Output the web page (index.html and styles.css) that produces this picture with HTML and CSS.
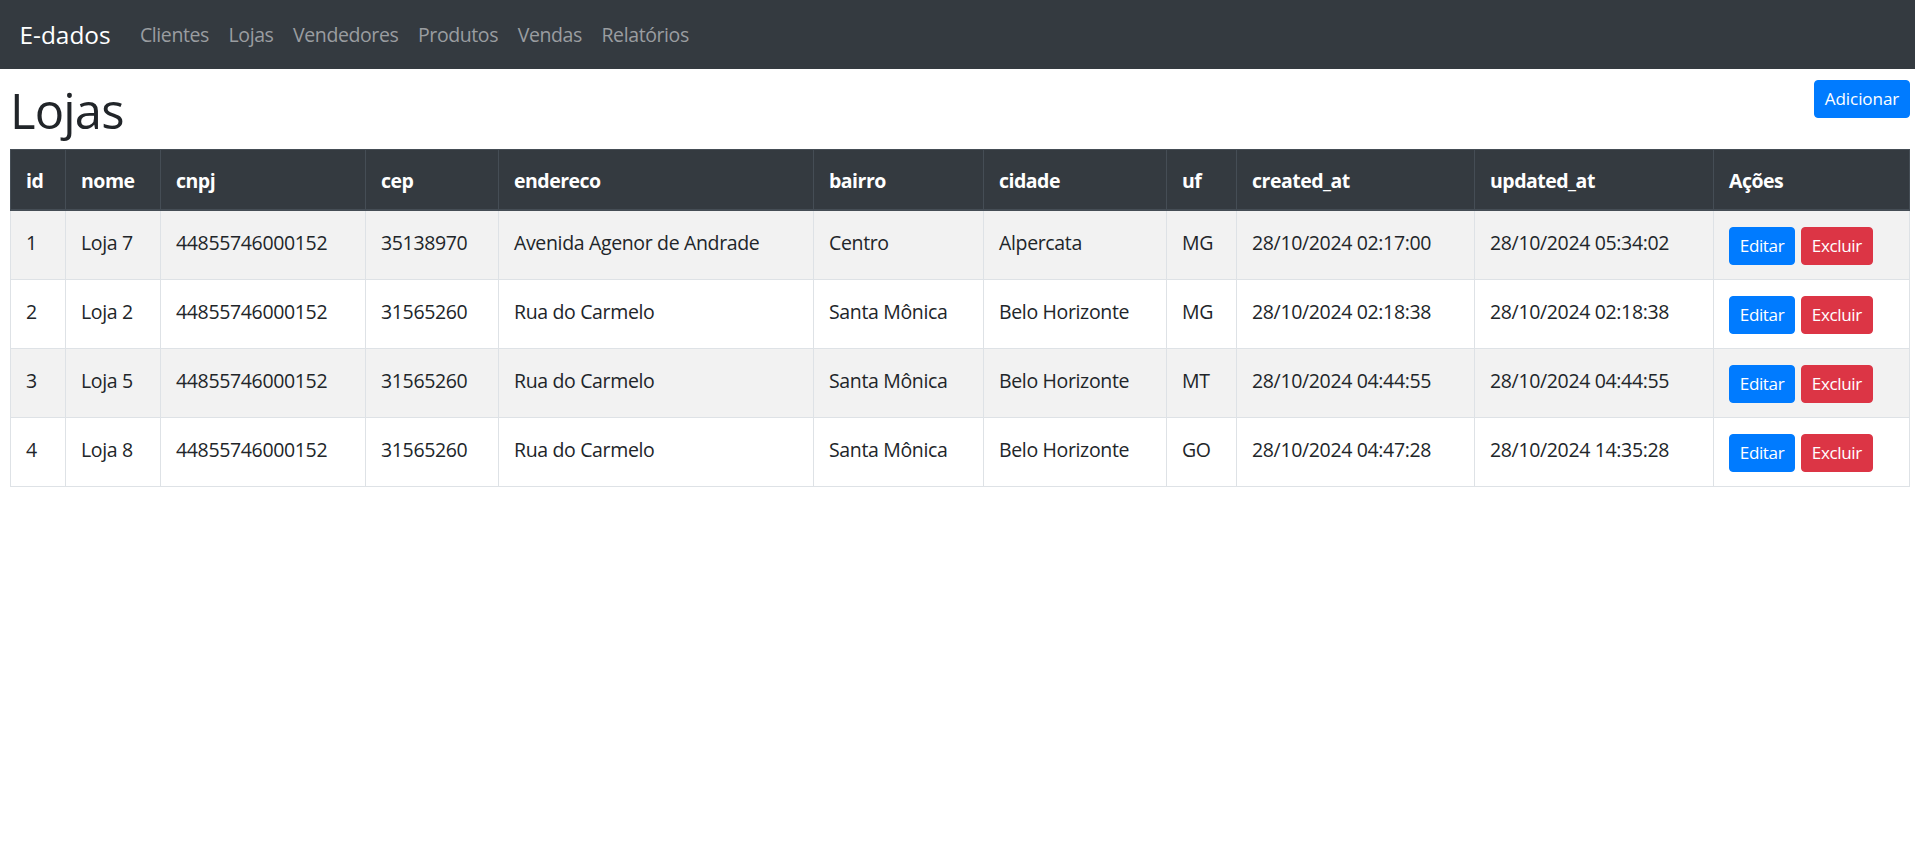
FILE: index.html
```html
<!DOCTYPE html>
<html lang="pt-BR">
<head>
<meta charset="utf-8">
<title>Lojas - E-dados</title>
<link rel="stylesheet" href="styles.css">
</head>
<body>
<nav class="navbar">
  <a class="brand" href="#">E-dados</a>
  <ul class="nav">
    <li><a href="#">Clientes</a></li>
    <li><a href="#">Lojas</a></li>
    <li><a href="#">Vendedores</a></li>
    <li><a href="#">Produtos</a></li>
    <li><a href="#">Vendas</a></li>
    <li><a href="#">Relatórios</a></li>
  </ul>
</nav>
<main class="content">
  <div class="page-head">
    <h1 class="title">Lojas</h1>
    <a class="btn btn-primary btn-add" href="#">Adicionar</a>
  </div>
  <table class="table">
    <colgroup>
      <col class="c-id"><col class="c-nome"><col class="c-cnpj"><col class="c-cep"><col class="c-end"><col class="c-bairro"><col class="c-cidade"><col class="c-uf"><col class="c-created"><col class="c-updated"><col class="c-acoes">
    </colgroup>
    <thead>
      <tr>
        <th>id</th><th>nome</th><th>cnpj</th><th>cep</th><th>endereco</th><th>bairro</th><th>cidade</th><th>uf</th><th>created_at</th><th>updated_at</th><th>Ações</th>
      </tr>
    </thead>
    <tbody>
      <tr>
        <td>1</td><td>Loja 7</td><td>44855746000152</td><td>35138970</td><td>Avenida Agenor de Andrade</td><td>Centro</td><td>Alpercata</td><td>MG</td><td>28/10/2024 02:17:00</td><td>28/10/2024 05:34:02</td>
        <td><div class="actions"><a class="btn btn-primary" href="#">Editar</a><a class="btn btn-danger" href="#">Excluir</a></div></td>
      </tr>
      <tr>
        <td>2</td><td>Loja 2</td><td>44855746000152</td><td>31565260</td><td>Rua do Carmelo</td><td>Santa Mônica</td><td>Belo Horizonte</td><td>MG</td><td>28/10/2024 02:18:38</td><td>28/10/2024 02:18:38</td>
        <td><div class="actions"><a class="btn btn-primary" href="#">Editar</a><a class="btn btn-danger" href="#">Excluir</a></div></td>
      </tr>
      <tr>
        <td>3</td><td>Loja 5</td><td>44855746000152</td><td>31565260</td><td>Rua do Carmelo</td><td>Santa Mônica</td><td>Belo Horizonte</td><td>MT</td><td>28/10/2024 04:44:55</td><td>28/10/2024 04:44:55</td>
        <td><div class="actions"><a class="btn btn-primary" href="#">Editar</a><a class="btn btn-danger" href="#">Excluir</a></div></td>
      </tr>
      <tr>
        <td>4</td><td>Loja 8</td><td>44855746000152</td><td>31565260</td><td>Rua do Carmelo</td><td>Santa Mônica</td><td>Belo Horizonte</td><td>GO</td><td>28/10/2024 04:47:28</td><td>28/10/2024 14:35:28</td>
        <td><div class="actions"><a class="btn btn-primary" href="#">Editar</a><a class="btn btn-danger" href="#">Excluir</a></div></td>
      </tr>
    </tbody>
  </table>
</main>
</body>
</html>
```
FILE: styles.css
```css
* { box-sizing: border-box; }

html, body {
  margin: 0;
  padding: 0;
  background: #fff;
}

body {
  font-family: "Open Sans", "Noto Sans", "Liberation Sans", sans-serif;
  font-size: 19.5px;
  line-height: 1.5;
  color: #212529;
  letter-spacing: -0.35px;
}

a { text-decoration: none; }

.navbar {
  display: flex;
  align-items: center;
  height: 69px;
  padding: 0 19.5px;
  background: #343a40;
}

.brand {
  color: #fff;
  font-size: 24.4px;
  line-height: 36px;
  margin-right: 19.5px;
  letter-spacing: 0;
}

.nav {
  display: flex;
  list-style: none;
  margin: 0;
  padding: 0;
}

.nav a {
  display: block;
  padding: 0 9.8px;
  color: #9a9da0;
  font-size: 19.5px;
  letter-spacing: -0.4px;
}

.content {
  padding: 11px 5px 0 10px;
}

.page-head {
  display: flex;
  justify-content: space-between;
  align-items: flex-start;
}

.title {
  margin: 1px 0 9px;
  font-size: 48.9px;
  font-weight: 500;
  line-height: 58.6px;
  letter-spacing: -0.8px;
}

.btn {
  display: inline-block;
  height: 38px;
  padding: 0 9.8px;
  border: 1px solid transparent;
  border-radius: 4px;
  color: #fff;
  font-size: 17.1px;
  line-height: 36px;
  white-space: nowrap;
  letter-spacing: -0.4px;
}

.btn-add {
  letter-spacing: -0.1px;
}

.btn-primary {
  background: #007bff;
  border-color: #007bff;
}

.btn-danger {
  background: #dc3545;
  border-color: #dc3545;
}

.table {
  width: 1899px;
  border-collapse: collapse;
  table-layout: fixed;
}

.c-id { width: 55px; }
.c-nome { width: 95px; }
.c-cnpj { width: 205px; }
.c-cep { width: 133px; }
.c-end { width: 315px; }
.c-bairro { width: 170px; }
.c-cidade { width: 183px; }
.c-uf { width: 70px; }
.c-created { width: 238px; }
.c-updated { width: 239px; }
.c-acoes { width: 196px; }

.table th,
.table td {
  text-align: left;
  vertical-align: top;
  line-height: 29px;
  white-space: nowrap;
}

.table th {
  padding: 16px 15px 14px;
  background: #343a40;
  color: #fff;
  font-weight: 700;
  letter-spacing: -0.5px;
  border: 1px solid #454d55;
  border-bottom-width: 2px;
}

.table td {
  padding: 17px 15px 13px;
  border: 1px solid #dee2e6;
}

.table td:last-child {
  padding-top: 16px;
  padding-bottom: 14px;
}

.table tbody tr:nth-child(odd) td {
  background: #f2f2f2;
}

.actions {
  display: flex;
  gap: 6px;
}
```
